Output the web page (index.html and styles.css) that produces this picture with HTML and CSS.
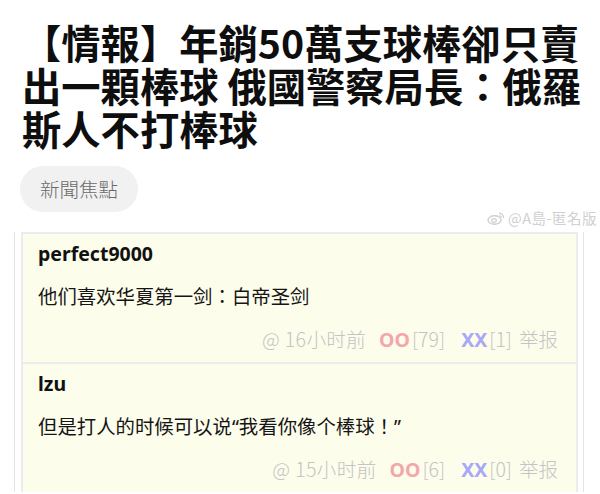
FILE: index.html
```html
<!DOCTYPE html>
<html lang="zh-Hant">
<head>
<meta charset="utf-8">
<link rel="stylesheet" href="styles.css">
</head>
<body>
<div class="page">
  <h1 class="title">【情報】年銷50萬支球棒卻只賣出一顆棒球 俄國警察局長：俄羅斯人不打棒球</h1>
  <div class="tag-row"><span class="tag">新聞焦點</span></div>
  <div class="watermark-row">
    <span class="watermark">
      <svg class="wb" width="18" height="14" viewBox="0 0 18 14"><ellipse cx="7.5" cy="9" rx="6.5" ry="4.3" fill="none" stroke="#d0d0d0" stroke-width="1.4"/><ellipse cx="7" cy="9.5" rx="2.3" ry="1.8" fill="none" stroke="#d0d0d0" stroke-width="1.2"/><path d="M12 2.5a4 4 0 0 1 4.5 4.5" fill="none" stroke="#d0d0d0" stroke-width="1.3"/><path d="M12.2 4.8a1.8 1.8 0 0 1 2.1 2" fill="none" stroke="#d0d0d0" stroke-width="1.1"/></svg>
      <span>@A島-匿名版</span>
    </span>
  </div>
  <div class="thread">
    <div class="comment">
      <div class="user">perfect9000</div>
      <div class="content">他们喜欢华夏第一剑：白帝圣剑</div>
      <div class="meta"><span class="time">@ 16小时前</span><span class="oo">OO</span><span class="num">[79]</span><span class="xx">XX</span><span class="num">[1]</span><span class="report">举报</span></div>
    </div>
    <div class="comment">
      <div class="user">lzu</div>
      <div class="content">但是打人的时候可以说“我看你像个棒球！”</div>
      <div class="meta"><span class="time">@ 15小时前</span><span class="oo">OO</span><span class="num">[6]</span><span class="xx">XX</span><span class="num">[0]</span><span class="report">举报</span></div>
    </div>
  </div>
</div>
</body>
</html>
```

FILE: styles.css
```css
html, body {
  margin: 0;
  padding: 0;
  background: #ffffff;
}
.page {
  width: 600px;
  height: 494px;
  overflow: hidden;
}
.title {
  margin: 0;
  padding: 20px 8px 0 22px;
  font-family: "Noto Sans CJK TC", "Noto Sans CJK SC", sans-serif;
  font-weight: 700;
  font-size: 39.3px;
  line-height: 43px;
  color: #0e0e0e;
}
.tag-row {
  padding: 17px 0 0 20px;
  display: flex;
}
.tag {
  display: inline-block;
  background: #f1f1f1;
  color: #6a6a6a;
  font-family: "Noto Sans CJK TC", sans-serif;
  font-weight: 300;
  font-size: 19.5px;
  line-height: 46px;
  padding: 0 20px;
  border-radius: 23px;
}
.watermark-row {
  display: flex;
  justify-content: flex-end;
  height: 18px;
  margin-top: -3px;
}
.watermark {
  display: flex;
  align-items: center;
  gap: 3px;
  color: #d0d0d0;
  font-family: "Noto Sans CJK TC", sans-serif;
  font-size: 14.5px;
  line-height: 18px;
  letter-spacing: 0.5px;
  padding-right: 3px;
}
.thread {
  margin: 5px 16px 0 14px;
  border-left: 1px solid #e4e4e4;
  border-right: 1px solid #e4e4e4;
  padding: 0 5px 0 6px;
}
.comment {
  background: #fdfdec;
  border: 2px solid #ececec;
  border-bottom: 0;
  padding: 6px 18px 0 15px;
  height: 130px;
  box-sizing: border-box;
  font-family: "Noto Sans", "Noto Sans CJK SC", sans-serif;
}
.user {
  font-family: "Noto Sans", "Noto Sans CJK SC", sans-serif;
  font-weight: 700;
  font-size: 19.5px;
  line-height: 28px;
  color: #111;
}
.content {
  margin-top: 16px;
  font-size: 19.4px;
  line-height: 26px;
  color: #151515;
}
.meta {
  margin-top: 16px;
  display: flex;
  justify-content: flex-end;
  align-items: baseline;
  font-family: "Noto Sans CJK SC", sans-serif;
  font-size: 19.5px;
  line-height: 26px;
  color: #c4c4c4;
  font-weight: 300;
}
.time { letter-spacing: 0.4px; }
.oo, .xx {
  font-family: "Noto Sans", sans-serif;
  font-weight: 700;
  margin-right: 2px;
}
.oo { color: #f3a7ab; margin-left: 13px; }
.xx { color: #a8a8f6; margin-left: 16px; }
.report { margin-left: 7px; }
```
